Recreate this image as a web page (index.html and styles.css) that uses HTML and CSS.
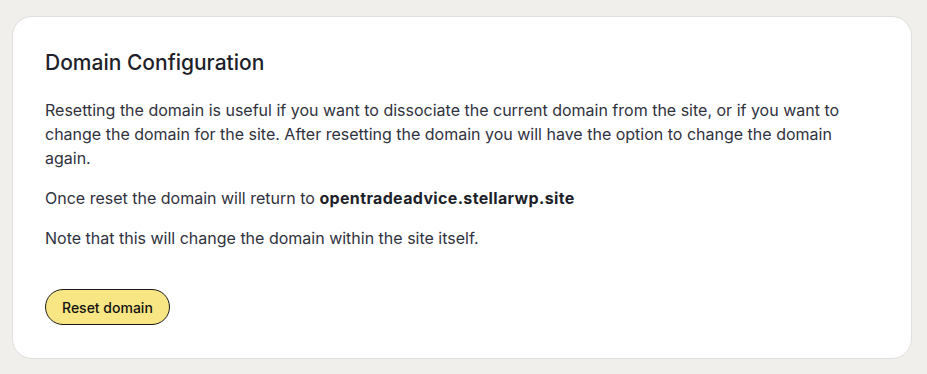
FILE: index.html
```html
<!DOCTYPE html>
<html lang="en">
<head>
    <meta charset="UTF-8">
    <meta name="viewport" content="width=device-width, initial-scale=1.0">
    <title>Domain Configuration</title>
    <link rel="stylesheet" href="styles.css">
</head>
<body>
    <div class="card">
        <h2 class="card-title">Domain Configuration</h2>
        <p>Resetting the domain is useful if you want to dissociate the current domain from the site, or if you want to change the domain for the site. After resetting the domain you will have the option to change the domain again.</p>
        <p>Once reset the domain will return to <strong>opentradeadvice.stellarwp.site</strong></p>
        <p>Note that this will change the domain within the site itself.</p>
        <div class="actions">
            <button class="reset-btn">Reset domain</button>
        </div>
    </div>
</body>
</html>
```

FILE: styles.css
```css
body {
    margin: 0;
    padding: 16px 15px 14px 12px;
    background: #f0efeb;
    font-family: Inter, Arial, sans-serif;
    color: #30323e;
}

.card {
    background: #fff;
    border: 1px solid #e2dede;
    border-radius: 20px;
    padding: 32px 32px 33px 32px;
}

.card-title {
    margin: 0 0 21px;
    font-size: 21px;
    font-weight: 500;
    line-height: 28px;
    color: #1e1f2a;
}

p {
    margin: 0 0 16px;
    font-size: 16px;
    line-height: 24px;
}

strong {
    font-weight: 700;
    letter-spacing: 0.35px;
    color: #1e1f2a;
}

.actions {
    margin-top: 39px;
}

.reset-btn {
    display: block;
    background: #f8e583;
    border: 1px solid #1b1b1b;
    border-radius: 18px;
    padding: 0 16px;
    height: 36px;
    font-family: Inter, Arial, sans-serif;
    font-size: 14px;
    font-weight: 500;
    color: #111;
    cursor: pointer;
}
```
